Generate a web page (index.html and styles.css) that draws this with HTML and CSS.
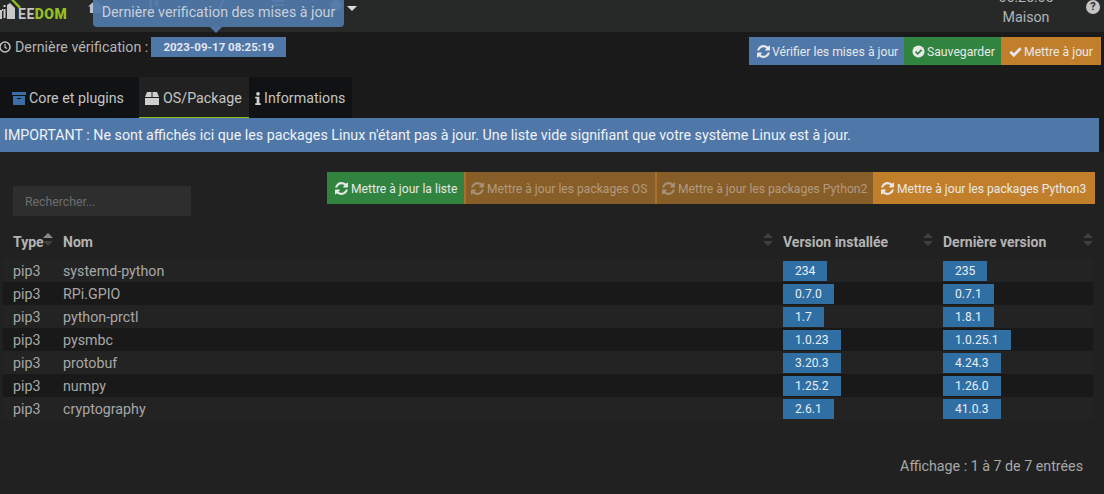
FILE: index.html
```html
<!DOCTYPE html>
<html lang="fr">
<head>
<meta charset="utf-8">
<title>Jeedom</title>
<link rel="stylesheet" href="styles.css">
</head>
<body>
<svg class="defs" width="0" height="0" aria-hidden="true">
  <symbol id="refresh" viewBox="0 0 1536 1536"><path fill="currentColor" d="M1511 928q0 5-1 7-64 268-268 434.500T764 1536q-146 0-282.500-55T238 1324l-129 129q-19 19-45 19t-45-19-19-45V960q0-26 19-45t45-19h448q26 0 45 19t19 45-19 45l-137 137q71 66 161 102t187 36q134 0 250-65t186-179q11-17 53-117 8-23 30-23h192q13 0 22.500 9.500T1511 928zm25-800v448q0 26-19 45t-45 19h-448q-26 0-45-19t-19-45 19-45l138-138Q969 256 768 256q-134 0-250 65T332 500q-11 17-53 117-8 23-30 23H50q-13 0-22.500-9.500T18 608v-7q65-268 270-434.500T768 0q146 0 284 55.500T1297 212l130-129q19-19 45-19t45 19 19 45z"/></symbol>
</svg>
<header class="topbar">
  <div class="logo">
    <svg class="logo-mark" width="24" height="24" viewBox="0 0 24 24"><path fill="#c9c9c9" d="M0 10h2v9H0zM7 5l3-2 5 5v11H7z"/><path fill="#c9c9c9" d="M2 9h1v2H2z"/><path fill="#94c11f" d="M11 0h3l7 7-2 1.500z"/><path fill="#272928" d="M3 6h3v13H3z"/><path fill="#c9c9c9" d="M3.500 5h2v2h-2zM3.500 9h2v9h-2z"/></svg>
    <span class="logo-word">EE<b>DOM</b></span>
  </div>
  <nav class="topnav">
    <svg class="nav-ic home" width="15" height="13" viewBox="0 0 16 14"><path fill="#b7c3cf" d="M8 0l8 7h-2v7H2V7H0z"/></svg>
    <svg class="nav-ic plug" width="11" height="12" viewBox="0 0 11 12"><path fill="#b7c3cf" d="M1 0h3v8H1zM7 0h3v6H7z"/></svg>
    <svg class="nav-ic wrench" width="12" height="12" viewBox="0 0 12 12"><path fill="#b7c3cf" d="M4 10L9 0h3L7 11z"/></svg>
    <svg class="nav-ic list" width="12" height="12" viewBox="0 0 12 12"><path fill="#b7c3cf" d="M0 0h12v2H0zM0 4h12v2H0z"/></svg>
    <svg class="nav-ic gear" width="12" height="12" viewBox="0 0 12 12"><circle cx="6" cy="5" r="5.500" fill="#b7c3cf"/></svg>
    <span class="tooltip">Dernière verification des mises à jour</span>
    <span class="caret"></span>
  </nav>
  <div class="clock">
    <span class="time">06:25:05</span>
    <span class="place">Maison</span>
  </div>
  <span class="help">?</span>
</header>

<main class="page">
  <section class="checkbar">
    <div class="lastcheck">
      <svg class="clock-ic" width="12" height="12" viewBox="0 0 12 12"><circle cx="6" cy="6" r="5" fill="none" stroke="#c4c4c4" stroke-width="1.500"/><path d="M6 3v3.300l2 1.200" fill="none" stroke="#c4c4c4" stroke-width="1.200"/></svg>
      <span class="lastcheck-label">Dernière vérification :</span>
      <span class="stamp">2023-09-17 08:25:19</span>
    </div>
    <div class="actions">
      <a class="btn blue"><svg class="ic"><use href="#refresh"/></svg>Vérifier les mises à jour</a>
      <a class="btn green"><svg class="ic" viewBox="0 0 14 14"><circle cx="7" cy="7" r="6.500" fill="currentColor"/><path d="M3.800 7.200l2.300 2.300 4.200-4.300" fill="none" stroke="#31843f" stroke-width="1.800"/></svg>Sauvegarder</a>
      <a class="btn orange"><svg class="ic" viewBox="0 0 14 14"><path d="M1.500 7.300l3.700 3.700 7.300-7.500" fill="none" stroke="currentColor" stroke-width="3"/></svg>Mettre à jour</a>
    </div>
  </section>

  <ul class="tabs">
    <li class="tab"><svg class="tab-ic" viewBox="0 0 14 13"><path fill="#3a6ea5" d="M0 0h14v3H0z"/><path fill="#3a6ea5" d="M1 4h12v9H1z"/><path fill="#121416" d="M5 6h4v1H5z"/></svg>Core et plugins</li>
    <li class="tab active"><svg class="tab-ic" viewBox="0 0 14 13"><path fill="#cfcfcf" d="M0 5l2-5h4.500v5zM7.500 0H12l2 5H7.500zM0 6h14v7H0z"/></svg>OS/Package</li>
    <li class="tab"><svg class="tab-ic narrow" viewBox="0 0 6 14"><circle cx="3" cy="2" r="2" fill="#cfcfcf"/><path fill="#cfcfcf" d="M0 5h4.500v7H6v2H0v-2h1.500V7H0z"/></svg>Informations</li>
  </ul>

  <p class="notice">IMPORTANT : Ne sont affichés ici que les packages Linux n'étant pas à jour. Une liste vide signifiant que votre système Linux est à jour.</p>

  <section class="panel">
    <div class="toolbar">
      <span class="search">Rechercher...</span>
      <div class="pkg-actions">
        <a class="btn big green"><svg class="ic"><use href="#refresh"/></svg>Mettre à jour la liste</a>
        <a class="btn big orange off"><svg class="ic"><use href="#refresh"/></svg>Mettre à jour les packages OS</a>
        <a class="btn big orange off"><svg class="ic"><use href="#refresh"/></svg>Mettre à jour les packages Python2</a>
        <a class="btn big orange"><svg class="ic"><use href="#refresh"/></svg>Mettre à jour les packages Python3</a>
      </div>
    </div>

    <table class="grid">
      <colgroup><col class="c-type"><col class="c-name"><col class="c-ver"><col class="c-ver"></colgroup>
      <thead>
        <tr>
          <th>Type<span class="sort up"></span></th>
          <th>Nom<span class="sort"></span></th>
          <th>Version installée<span class="sort"></span></th>
          <th>Dernière version<span class="sort"></span></th>
        </tr>
      </thead>
      <tbody>
        <tr><td>pip3</td><td>systemd-python</td><td><span class="ver">234</span></td><td><span class="ver">235</span></td></tr>
        <tr><td>pip3</td><td>RPi.GPIO</td><td><span class="ver">0.7.0</span></td><td><span class="ver">0.7.1</span></td></tr>
        <tr><td>pip3</td><td>python-prctl</td><td><span class="ver">1.7</span></td><td><span class="ver">1.8.1</span></td></tr>
        <tr><td>pip3</td><td>pysmbc</td><td><span class="ver">1.0.23</span></td><td><span class="ver">1.0.25.1</span></td></tr>
        <tr><td>pip3</td><td>protobuf</td><td><span class="ver">3.20.3</span></td><td><span class="ver">4.24.3</span></td></tr>
        <tr><td>pip3</td><td>numpy</td><td><span class="ver">1.25.2</span></td><td><span class="ver">1.26.0</span></td></tr>
        <tr><td>pip3</td><td>cryptography</td><td><span class="ver">2.6.1</span></td><td><span class="ver">41.0.3</span></td></tr>
      </tbody>
    </table>
    <p class="info">Affichage : 1 à 7 de 7 entrées</p>
  </section>
</main>
</body>
</html>
```
FILE: styles.css
```css
* { box-sizing: border-box; }
html, body { margin: 0; height: 494px; overflow: hidden; }
body { background: #1a1a1a; color: #b4b4b4; font: 14.25px/20px Roboto, sans-serif; }
.defs { position: absolute; }
.topbar { height: 32px; background: #272928; display: flex; align-items: flex-start; position: relative; }
.logo { width: 88px; height: 32px; display: flex; overflow: hidden; flex: none; }
.logo-mark { flex: none; margin-right: -6px; }
.logo-word { font-weight: 700; font-size: 14px; line-height: 14px; margin-top: 7px; letter-spacing: .5px; color: #c4c4c4; }
.logo-word b { color: #94c11f; }
.topnav { flex: 1; display: flex; height: 32px; position: relative; }
.nav-ic { position: absolute; top: 0; }
.home { left: 0; }
.plug { left: 60px; }
.wrench { left: 125px; }
.list { left: 184px; }
.gear { left: 242px; }
.tooltip { position: absolute; left: 5px; top: -6px; width: 251px; height: 33px; background: rgba(79, 119, 168, .94); color: #c8d0da; border-radius: 4px; line-height: 24px; padding-top: 6px; text-align: center; white-space: nowrap; z-index: 2; }
.tooltip::after { content: ""; position: absolute; left: 117px; top: 33px; border: 6px solid transparent; border-top-color: #4f77a8; border-bottom: 0; }
.caret { position: absolute; left: 259px; top: 6px; border: 5px solid transparent; border-top-color: #dcdcdc; border-bottom: 0; }
.clock { width: 90px; height: 32px; margin-right: 33px; color: #aeb4ba; overflow: hidden; position: relative; display: flex; justify-content: center; }
.time { position: absolute; top: -13px; line-height: 20px; }
.place { position: absolute; top: 7px; line-height: 20px; }
.help { position: absolute; right: 4px; top: 0; width: 14px; height: 14px; border-radius: 50%; background: #c4c4c4; color: #272928; font-size: 11px; font-weight: 700; line-height: 14px; text-align: center; }

.checkbar { height: 45px; display: flex; justify-content: space-between; align-items: flex-start; }
.lastcheck { display: flex; align-items: center; padding-top: 5px; height: 25px; white-space: nowrap; }
.clock-ic { margin-right: 4px; margin-left: -1px; }
.lastcheck-label { color: #b4b4b4; }
.stamp { margin-left: 3px; width: 135px; height: 20px; background: #4f77a8; color: #e4e8ee; font-size: 11.5px; font-weight: 700; line-height: 20px; text-align: center; }
.actions { display: flex; margin-top: 5px; margin-right: 3px; }
.btn { display: inline-flex; align-items: center; height: 28px; padding: 1px 0 0 8px; color: #e8e8e8; font-size: 12.2px; white-space: nowrap; }
.actions .ic { margin-right: 2px; }
.actions .blue { width: 155px; }
.actions .green { width: 97px; }
.actions .orange { width: 100px; }
.blue { background: #4f77a8; }
.green { background: #31843f; }
.orange { background: #c27f2b; }
.ic { width: 13px; height: 13px; margin-right: 3px; flex: none; }

.tabs { list-style: none; display: flex; margin: 0; padding: 0; height: 41px; }
.tab { display: flex; align-items: center; height: 41px; padding: 2px 4px 0 12px; background: #101214; color: #c4c4c4; white-space: nowrap; border-bottom: 1px solid #101214; }
.tab:first-child { width: 139px; }
.tab:first-child .tab-ic { margin-right: 3px; }
.tab:nth-child(2) { width: 110px; padding: 2px 0 0 6px; }
.tab:nth-child(3) { width: 103px; padding: 2px 0 0 6px; }
.tab.active { background: #212121; border-bottom: 1px solid #8fbf1c; }
.tab-ic { width: 14px; height: 13px; margin-right: 4px; flex: none; }
.tab-ic.narrow { width: 6px; margin-right: 3px; }

.notice { margin: 0; width: 1099px; height: 34px; background: #4f77a8; color: #f0f2f5; line-height: 34px; padding-left: 4px; white-space: nowrap; }

.panel { background: #212121; height: 342px; padding: 20px 0 0 3px; }
.toolbar { display: flex; justify-content: space-between; height: 48px; padding-right: 9px; }
.search { margin: 14px 0 0 10px; width: 178px; height: 30px; background: #2e2e2e; color: #6a6e72; font-size: 12.25px; line-height: 32px; padding-left: 12px; }
.pkg-actions { display: flex; height: 32px; }
.btn.big { height: 32px; padding-left: 8px; font-size: 12.1px; }
.btn.big:first-child { width: 137px; }
.btn.big.off { color: #b29a80; background: #885e28; border-left: 2px solid #a8702a; padding-left: 5px; }
.btn.big.off .ic { color: #a79078; }
.btn.big:nth-child(2) { width: 191px; }
.btn.big:nth-child(3) { width: 218px; }
.btn.big:last-child { width: 222px; }

.grid { width: 1090px; table-layout: fixed; border-collapse: collapse; margin-top: 6px; }
.c-type { width: 50px; }
.c-ver { width: 160px; }
.grid th { height: 33px; text-align: left; font-weight: 700; font-size: 14px; color: #b4b4b4; padding: 0 10px 1px; position: relative; }
.grid td { height: 23px; padding: 0 10px; color: #a8a8a8; }
.grid tbody tr:nth-child(odd) { background: #232323; }
.grid tbody tr:nth-child(even) { background: #191919; }
.ver { display: inline-block; height: 20px; padding: 0 12px; background: #306fa3; color: #e8eef3; font-size: 12.1px; line-height: 20px; vertical-align: middle; }
.sort { position: absolute; right: 0; top: 7px; width: 10px; height: 14px; }
.sort::before, .sort::after { content: ""; position: absolute; left: 0; border: 5px solid transparent; }
.sort::before { top: 0; border-top: 0; border-bottom-color: #3f4143; }
.sort::after { top: 8px; border-bottom: 0; border-top-color: #3f4143; }
.sort.up::before { border-bottom-color: #8a8a8a; }
.info { margin: 36px 21px 0 0; text-align: right; color: #a8a8a8; }
```
